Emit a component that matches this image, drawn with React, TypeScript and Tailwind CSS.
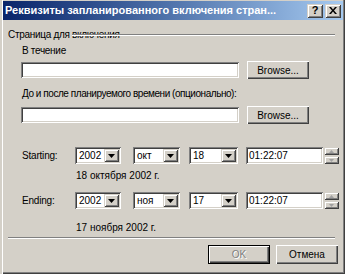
const sunken =
  'shadow-[inset_1px_1px_0_#808080,inset_-1px_-1px_0_#ffffff,inset_2px_2px_0_#404040,inset_-2px_-2px_0_#d4d0c8]';
const raised =
  'shadow-[inset_1px_1px_0_#ffffff,inset_-1px_-1px_0_#404040,inset_-2px_-2px_0_#808080]';
const raisedSoft =
  'shadow-[inset_1px_1px_0_#d4d0c8,inset_-1px_-1px_0_#404040,inset_2px_2px_0_#ffffff,inset_-2px_-2px_0_#808080]';

const Arrow = () => (
  <svg width="7" height="4" viewBox="0 0 7 4">
    <path d="M0 0h7L3.5 4z" fill="#000" />
  </svg>
);

const Combo = ({ value, w }: { value: string; w: string }) => (
  <div className={`${w} h-[17px] bg-white ${sunken} flex items-stretch p-[2px]`}>
    <span className="flex-1 pl-[2px] leading-[13px]">{value}</span>
    <div className={`w-[15px] bg-[#d4d0c8] ${raisedSoft} flex items-center justify-center`}>
      <Arrow />
    </div>
  </div>
);

const Spinner = () => (
  <div className="flex flex-col w-[15px] h-[17px] gap-[1px]">
    <div className={`flex-1 bg-[#d4d0c8] ${raisedSoft} flex items-center justify-center`}>
      <svg width="5" height="3" viewBox="0 0 5 3">
        <path d="M0 3h5L2.5 0z" fill="#a0a0a0" />
      </svg>
    </div>
    <div className={`flex-1 bg-[#d4d0c8] ${raisedSoft} flex items-center justify-center`}>
      <svg width="5" height="3" viewBox="0 0 5 3">
        <path d="M0 0h5L2.5 3z" fill="#a0a0a0" />
      </svg>
    </div>
  </div>
);

const DateRow = ({ label, month, day }: { label: string; month: string; day: string }) => (
  <div className="flex items-center ml-[22px]">
    <span className="w-[53px] tracking-[-0.2px]">{label}</span>
    <Combo value="2002" w="w-[46px]" />
    <div className="w-[12px]" />
    <Combo value={month} w="w-[47px]" />
    <div className="w-[9px]" />
    <Combo value={day} w="w-[49px]" />
    <div className="w-[8px]" />
    <div className={`w-[77px] h-[17px] bg-white ${sunken} pl-[3px] pt-[2px] leading-[13px]`}>01:22:07</div>
    <div className="w-[1px]" />
    <Spinner />
  </div>
);

const PathRow = () => (
  <div className="flex items-center ml-[21px]">
    <div className={`w-[218px] h-[16px] bg-white ${sunken}`} />
    <button className={`ml-[8px] w-[62px] h-[18px] bg-[#d4d0c8] ${raised} leading-[13px]`}>Browse...</button>
  </div>
);

export default function App() {
  return (
    <div
      className="relative w-[345px] h-[274px] bg-[#d4d0c8] flex flex-col text-[10px] leading-[13px] text-black shadow-[inset_2px_0_0_#d4d0c8,inset_3px_0_0_#ffffff,inset_-1px_-1px_0_#404040,inset_-2px_-2px_0_#808080]"
      style={{ fontFamily: '"Liberation Sans", Arial, sans-serif' }}
    >
      <div className="mt-[1px] ml-[3px] mr-[2px] h-[19px] bg-gradient-to-r from-[#0a246a] to-[#a6caf0] flex items-center pl-[2px] pr-[2px]">
        <span className="flex-1 text-white font-bold text-[11px] whitespace-nowrap overflow-hidden">
          Реквизиты запланированного включения стран...
        </span>
        <button className={`w-[16px] h-[14px] bg-[#d4d0c8] ${raisedSoft} flex items-center justify-center font-bold text-[11px] leading-none`}>
          ?
        </button>
        <button className={`ml-[2px] w-[16px] h-[14px] bg-[#d4d0c8] ${raisedSoft} flex items-center justify-center`}>
          <svg width="8" height="7" viewBox="0 0 8 7">
            <path d="M0 0h2l2 2.5L6 0h2L5 3.5 8 7H6L4 4.5 2 7H0l3-3.5z" fill="#000" />
          </svg>
        </button>
      </div>

      <div className="relative flex flex-col">
        <div className="mt-[8px] ml-[8px] tracking-[-0.3px]">Страница для включения</div>
        <div className="absolute left-[72px] top-[14px] w-[263px] h-[2px] border-t border-[#808080] border-b border-b-white" />

        <div className="mt-[3px] ml-[22px] tracking-[-0.3px]">В течение</div>
        <div className="mt-[4px]">
          <PathRow />
        </div>

        <div className="mt-[8px] ml-[22px] tracking-[-0.45px]">До и после планируемого времени (опционально):</div>
        <div className="mt-[6px]">
          <PathRow />
        </div>

        <div className="mt-[23px]">
          <DateRow label="Starting:" month="окт" day="18" />
        </div>
        <div className="mt-[5px] ml-[76px]">18 октября 2002 г.</div>

        <div className="mt-[10px]">
          <DateRow label="Ending:" month="ноя" day="17" />
        </div>
        <div className="mt-[12px] ml-[76px]">17 ноября 2002 г.</div>

        <div className="mt-[3px] ml-[8px] w-[327px] h-[2px] border-t border-[#808080] border-b border-b-white" />

        <div className="mt-[6px] flex justify-end pr-[7px] gap-[6px]">
          <div className="w-[62px] h-[19px] border border-black">
            <div className={`w-full h-full bg-[#d4d0c8] ${raised} flex items-center justify-center text-[#808080] [text-shadow:1px_1px_0_#ffffff]`}>
              OK
            </div>
          </div>
          <button className={`w-[62px] h-[19px] bg-[#d4d0c8] ${raised} leading-[13px]`}>Отмена</button>
        </div>
      </div>
    </div>
  );
}
